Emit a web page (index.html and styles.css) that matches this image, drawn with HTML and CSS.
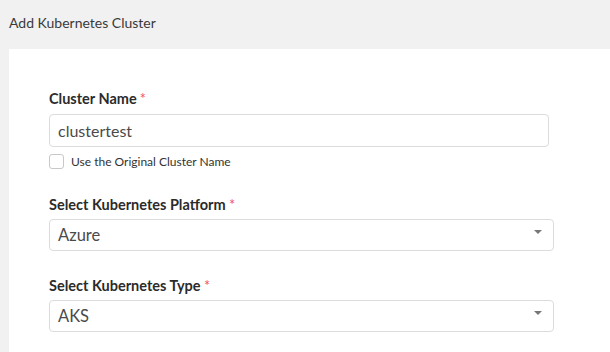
FILE: index.html
```html
<!DOCTYPE html>
<html lang="en">
<head>
    <meta charset="UTF-8">
    <meta name="viewport" content="width=device-width, initial-scale=1.0">
    <title>Add Kubernetes Cluster</title>
    <link rel="stylesheet" href="styles.css">
</head>
<body>
    <div class="page-header">Add Kubernetes Cluster</div>

    <div class="panel">
        <form id="clusterForm">
            <div class="field field-name">
                <label class="field-label" for="clusterName">Cluster Name<span class="req req-tight">*</span></label>
                <input type="text" id="clusterName" class="text-input" value="clustertest">
                <label class="check-row">
                    <input type="checkbox" id="useOriginal">
                    <span class="check-box"></span>
                    <span class="check-text">Use the Original Cluster Name</span>
                </label>
            </div>

            <div class="field">
                <label class="field-label">Select Kubernetes Platform <span class="req">*</span></label>
                <div class="select-box">
                    <span class="select-value">Azure</span>
                    <span class="select-arrow"></span>
                </div>
            </div>

            <div class="field">
                <label class="field-label">Select Kubernetes Type <span class="req">*</span></label>
                <div class="select-box">
                    <span class="select-value">AKS</span>
                    <span class="select-arrow"></span>
                </div>
            </div>
        </form>
    </div>
</body>
</html>
```

FILE: styles.css
```css
body {
    font-family: Lato, "Open Sans", sans-serif;
    background-color: #f1f1f1;
    margin: 0;
    padding: 0;
    color: #333;
    overflow: hidden;
}

.page-header {
    height: 49px;
    box-sizing: border-box;
    padding: 13px 9px 0;
    font-size: 14px;
    line-height: 20px;
    color: #3a3a3a;
}

.panel {
    margin-left: 9px;
    background-color: #fff;
    padding: 40px 40px 20px;
}

form {
    display: flex;
    flex-direction: column;
}

.field {
    display: flex;
    flex-direction: column;
    margin-bottom: 25px;
}

.field-name {
    margin-bottom: 26px;
}

.field-label {
    font-size: 14.5px;
    font-weight: bold;
    line-height: 20px;
    color: #2b2b2b;
    margin-bottom: 4px;
}

.field-name .field-label {
    margin-bottom: 5px;
}

.req {
    color: #f0506e;
    font-weight: normal;
}

.req-tight {
    margin-left: 3px;
}

.text-input {
    width: 500px;
    height: 33px;
    box-sizing: border-box;
    margin: 0;
    padding: 0 8px;
    border: 1px solid #dcdcdc;
    border-radius: 4px;
    font-family: inherit;
    font-size: 16px;
    color: #4a4a4a;
    outline: none;
}

.check-row {
    display: flex;
    align-items: center;
    gap: 7px;
    margin-top: 7px;
    height: 15px;
    cursor: pointer;
}

.check-row input {
    display: none;
}

.check-box {
    width: 15px;
    height: 15px;
    box-sizing: border-box;
    border: 1px solid #c8c8c8;
    border-radius: 3px;
    background-color: #fff;
}

.check-text {
    font-size: 12px;
    color: #333;
}

.select-box {
    position: relative;
    width: 505px;
    height: 32px;
    box-sizing: border-box;
    border: 1px solid #dcdcdc;
    border-radius: 4px;
    padding: 0 8px;
    display: flex;
    align-items: center;
}

.select-value {
    font-size: 16.5px;
    color: #4a4a4a;
}

.select-arrow {
    position: absolute;
    right: 11px;
    top: 10px;
    width: 0;
    height: 0;
    border-left: 4px solid transparent;
    border-right: 4px solid transparent;
    border-top: 4px solid #777;
}
```
